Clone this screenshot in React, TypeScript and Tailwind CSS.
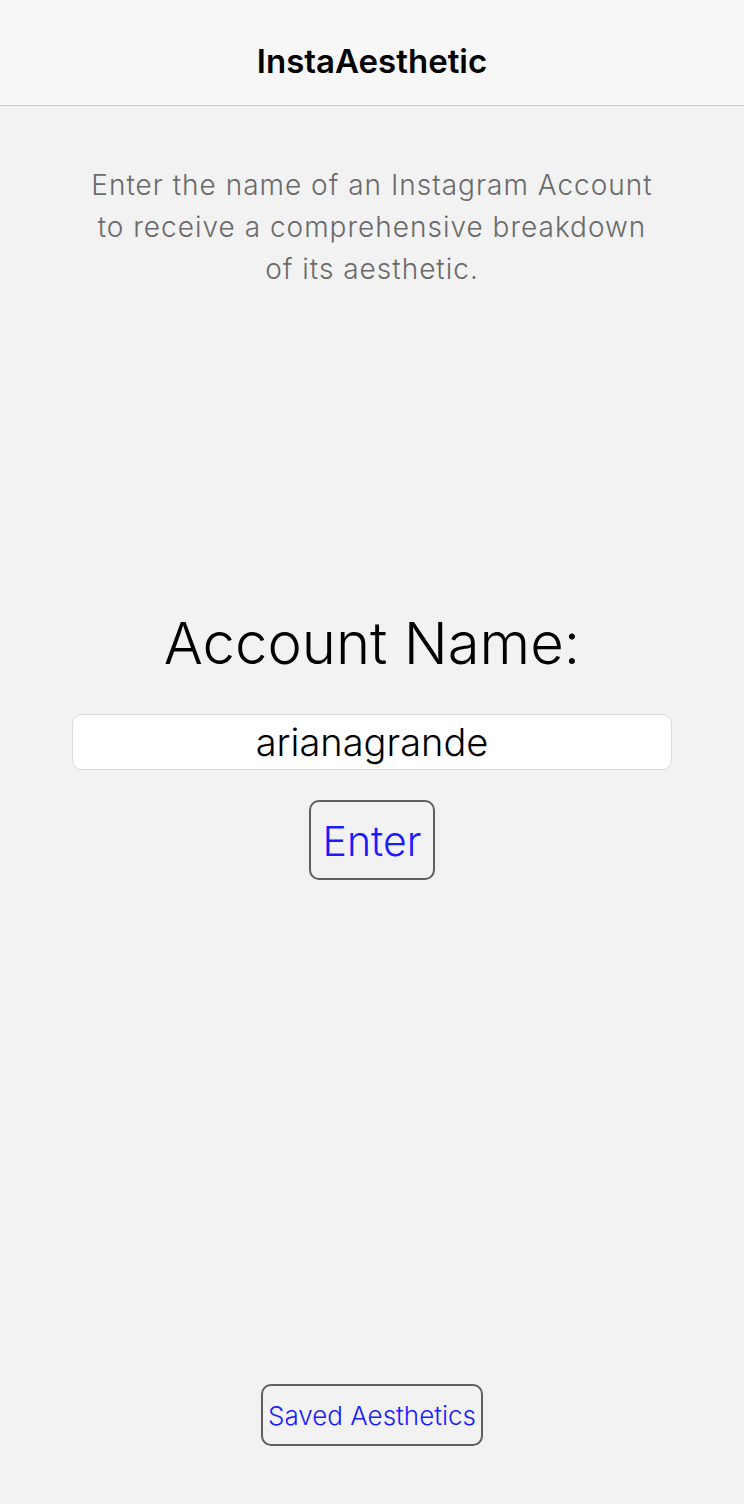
import { useState } from 'react';

const font = { fontFamily: 'Inter, "Noto Sans", sans-serif' };

export default function App() {
  const [account, setAccount] = useState('arianagrande');

  return (
    <div
      className="flex h-[1504px] w-full flex-col bg-[#f2f2f2] font-['Inter','Noto_Sans',sans-serif]"
      style={font}
    >
      <header className="flex h-[106px] shrink-0 items-end justify-center border-b border-[#c6c6c6] bg-[#f7f7f7] pb-[24px]">
        <h1 className="text-[33px] leading-[40px] font-semibold text-black">InstaAesthetic</h1>
      </header>

      <p className="mx-auto mt-[58px] w-[640px] text-center text-[28px] leading-[42px] font-light tracking-[1px] text-[#6a6a6a]">
        Enter the name of an Instagram Account
        <br />
        to receive a comprehensive breakdown
        <br />
        of its aesthetic.
      </p>

      <div className="mt-[317px] flex flex-col items-center">
        <h2 className="text-[58px] leading-[72px] font-light text-black">Account Name:</h2>
        <input
          value={account}
          onChange={(e) => setAccount(e.target.value)}
          className="mt-[35px] h-[56px] w-[600px] rounded-[10px] border border-[#dadada] bg-white text-center text-[38px] font-light text-black outline-none"
        />
        <button className="mt-[30px] h-[80px] w-[126px] rounded-[10px] border-2 border-[#5f5f5f] pt-[4px] text-[41px] font-light text-[#1b1bff]">
          Enter
        </button>
      </div>

      <div className="flex-1" />

      <div className="mb-[58px] flex justify-center">
        <button className="h-[62px] w-[222px] rounded-[10px] border-2 border-[#5f5f5f] text-[26px] font-light text-[#1b1bff]">
          Saved Aesthetics
        </button>
      </div>
    </div>
  );
}
